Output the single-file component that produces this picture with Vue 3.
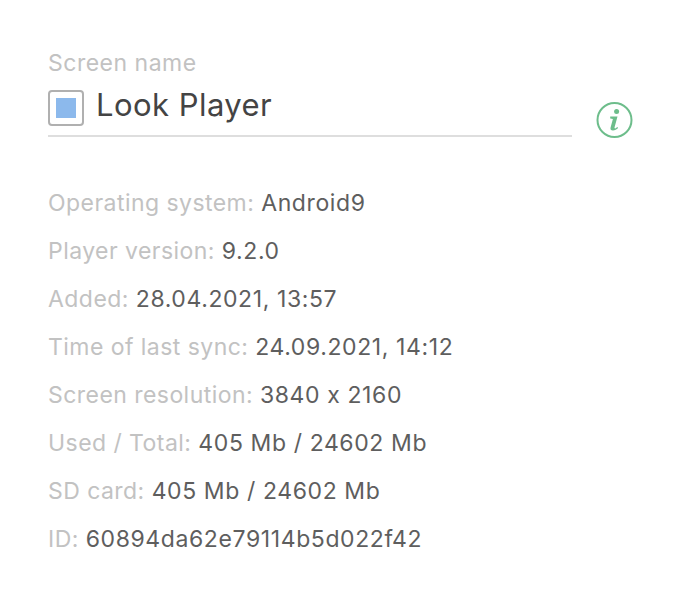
<script setup>
const rows = [
  ['Operating system:', 'Android9'],
  ['Player version:', '9.2.0'],
  ['Added:', '28.04.2021, 13:57'],
  ['Time of last sync:', '24.09.2021, 14:12'],
  ['Screen resolution:', '3840 x 2160'],
  ['Used / Total:', '405 Mb / 24602 Mb'],
  ['SD card:', '405 Mb / 24602 Mb'],
  ['ID:', '60894da62e79114b5d022f42'],
]
</script>

<template>
  <div class="page">
    <div class="head">
      <div class="field">
        <div class="label">Screen name</div>
        <div class="input">
          <span class="swatch"><span class="fill"></span></span>
          <span class="name">Look Player</span>
        </div>
      </div>
      <svg class="info" width="38" height="38" viewBox="0 0 38 38" fill="none">
        <circle cx="18.5" cy="19" r="17" stroke="#6dbd8b" stroke-width="2"/>
        <circle cx="20.6" cy="10.4" r="2.5" fill="#6dbd8b"/>
        <path d="M14.2 15.4h7.3l-3 11.2c-.2.8.5 1 1.1.6l1.8-1.2.7 1c-1.5 1.5-3.2 2.4-5.1 2.4-2.1 0-2.9-1.2-2.4-3l2.3-8.4-2.7-.6z" fill="#6dbd8b"/>
      </svg>
    </div>
    <div class="rows">
      <div v-for="r in rows" :key="r[0]" class="row">
        <span class="k">{{ r[0] }}</span> <span class="v">{{ r[1] }}</span>
      </div>
    </div>
  </div>
</template>

<style>
html, body { background: #fff; }
</style>
<style scoped>
.page { width: 680px; height: 600px; padding: 48px 0 0 48px; box-sizing: border-box; font-family: Inter, sans-serif; font-feature-settings: "calt" 0; overflow: hidden; }
.head { display: flex; align-items: flex-end; gap: 24px; }
.field { width: 524px; }
.label { font-size: 23px; line-height: 30px; letter-spacing: 0.5px; color: #c2c2c2; }
.input { display: flex; align-items: flex-start; gap: 12px; padding-top: 9px; border-bottom: 2px solid #dedede; box-sizing: border-box; height: 59px; }
.swatch { width: 36px; height: 36px; margin-top: 3px; flex: none; box-sizing: border-box; border: 2px solid #b0b0b0; border-radius: 4px; display: flex; align-items: center; justify-content: center; }
.fill { width: 20px; height: 20px; background: #8cb9ec; }
.name { font-size: 31px; line-height: 36px; letter-spacing: 0.45px; color: #444; }
.info { margin-bottom: -2px; }
.rows { margin-top: 42px; }
.row { font-size: 23px; line-height: 48px; letter-spacing: 0.45px; }
.k { color: #c2c2c2; }
.v { color: #5e5e5e; letter-spacing: 0.6px; }
</style>
